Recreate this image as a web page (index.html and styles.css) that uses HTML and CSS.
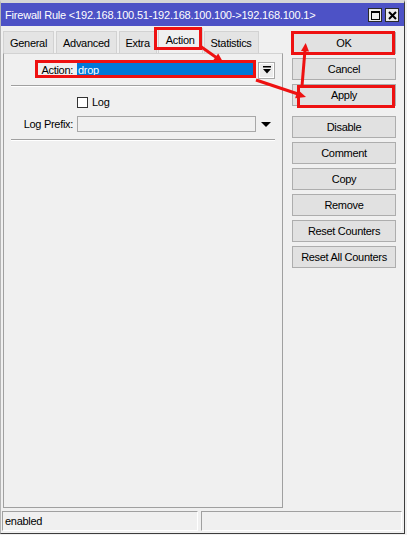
FILE: index.html
```html
<!DOCTYPE html>
<html>
<head>
<meta charset="utf-8">
<link rel="stylesheet" href="styles.css">
</head>
<body>
<div class="window">
  <div class="titlebar">
    <span class="title">Firewall Rule &lt;192.168.100.51-192.168.100.100-&gt;192.168.100.1&gt;</span>
    <div class="tb-btns">
      <span class="tb-btn"><svg width="9" height="9" viewBox="0 0 9 9"><rect x="0.5" y="0.5" width="8" height="8" fill="none" stroke="#000"/><rect x="0" y="0" width="9" height="2" fill="#000"/></svg></span>
      <span class="tb-btn"><svg width="9" height="9" viewBox="0 0 9 9"><path d="M1 1 L8 8 M8 1 L1 8" stroke="#000" stroke-width="2"/></svg></span>
    </div>
  </div>
  <div class="client">
    <div class="main">
      <div class="left">
        <div class="tabs">
          <div class="tab">General</div>
          <div class="tab">Advanced</div>
          <div class="tab">Extra</div>
          <div class="tab active">Action</div>
          <div class="tab">Statistics</div>
        </div>
        <div class="panel">
          <div class="row">
            <span class="label">Action:</span>
            <span class="field selected">drop</span>
            <span class="dd-btn"><svg width="8" height="8" viewBox="0 0 8 8"><rect x="0" y="0" width="8" height="1.5" fill="#000"/><path d="M0 3 H8 L4 7.5 Z" fill="#000"/></svg></span>
          </div>
          <div class="sep"></div>
          <div class="row check-row">
            <span class="label"></span>
            <label class="check"><span class="box"></span>Log</label>
          </div>
          <div class="row">
            <span class="label">Log Prefix:</span>
            <span class="field disabled"></span>
            <span class="dd-tri"><svg width="10" height="5" viewBox="0 0 10 5"><path d="M0 0 H10 L5 5 Z" fill="#000"/></svg></span>
          </div>
          <div class="sep"></div>
        </div>
      </div>
      <div class="right">
        <div class="btn">OK</div>
        <div class="btn">Cancel</div>
        <div class="btn">Apply</div>
        <div class="btn group">Disable</div>
        <div class="btn">Comment</div>
        <div class="btn">Copy</div>
        <div class="btn">Remove</div>
        <div class="btn">Reset Counters</div>
        <div class="btn">Reset All Counters</div>
      </div>
    </div>
    <div class="status">
      <div class="cell first">enabled</div>
      <div class="cell second"></div>
    </div>
  </div>
  <svg class="annot" width="407" height="535" viewBox="0 0 407 535">
    <g fill="none" stroke="#ee1111" stroke-width="3">
      <rect x="155.5" y="28.5" width="45" height="20"/>
      <rect x="36.5" y="61.5" width="218" height="15"/>
      <rect x="292.5" y="32.5" width="101" height="21"/>
      <rect x="298.5" y="86.5" width="95" height="20"/>
      <line x1="200" y1="46" x2="217" y2="58"/>
      <line x1="256" y1="80" x2="298" y2="94"/>
      <line x1="302" y1="86" x2="305" y2="50"/>
    </g>
    <g fill="#ee1111">
      <polygon points="223,62 213.4,59.9 218.2,53.5"/>
      <polygon points="306,97 295.1,98.3 297.9,89.7"/>
      <polygon points="305.7,43 301,51 309,51.4"/>
    </g>
  </svg>
</div>
</body>
</html>
```
FILE: styles.css
```css
* { box-sizing: border-box; }
html, body { margin: 0; padding: 0; }
body {
  background: #f0f0f0;
  font-family: "Liberation Sans", Arial, sans-serif;
  font-size: 11px;
  letter-spacing: -0.3px;
  color: #000;
}
.window {
  position: relative;
  width: 405px;
  height: 534px;
  background: #f0f0f0;
  border-top: 3px solid #d6d6d6;
  border-left: 1px solid #b4b4b4;
  border-right: 1px solid #3c3c3c;
  border-bottom: 1px solid #3c3c3c;
  display: flex;
  flex-direction: column;
}
.titlebar {
  height: 23px;
  background: #4d52c6;
  display: flex;
  align-items: center;
  padding: 1px 5px 0 4px;
}
.title {
  flex: 1;
  color: #fff;
  letter-spacing: -0.2px;
  white-space: nowrap;
}
.tb-btns { display: flex; gap: 3px; }
.tb-btn {
  width: 14px;
  height: 14px;
  background: #ececec;
  border: 1px solid #2a2a2a;
  display: flex;
  align-items: center;
  justify-content: center;
}
.client {
  flex: 1;
  display: flex;
  flex-direction: column;
  padding: 0 2px 2px 1px;
}
.main {
  flex: 1;
  display: flex;
  padding-bottom: 3px;
}
.left {
  width: 280px;
  margin-left: 1px;
  display: flex;
  flex-direction: column;
}
.tabs {
  display: flex;
  align-items: flex-end;
  gap: 2px;
  height: 27px;
}
.tab {
  height: 22px;
  padding: 0 6px;
  background: #e4e4e4;
  border: 1px solid #d2d2d2;
  border-bottom: none;
  display: flex;
  align-items: center;
}
.tab.active {
  height: 25px;
  background: #f0f0f0;
  padding: 0 7px 3px;
  margin: 0 -1px;
}
.panel {
  flex: 1;
  border: 1px solid #a0a0a0;
  border-top-color: #d2d2d2;
  padding: 8px 7px 0 0;
}
.row {
  display: flex;
  align-items: center;
  height: 16px;
}
.label {
  width: 73px;
  text-align: right;
  padding-right: 4px;
  white-space: nowrap;
}
.field {
  width: 179px;
  height: 16px;
  display: flex;
  align-items: center;
  padding-left: 1px;
}
.field.selected { background: #0078d7; color: #fff; }
.field.disabled { border: 1px solid #a8a8a8; background: #f0f0f0; }
.dd-btn {
  width: 17px;
  height: 17px;
  margin-left: 2px;
  background: #ececec;
  border: 1px solid #a8a8a8;
  box-shadow: inset 0 0 0 1px #fff;
  display: flex;
  align-items: center;
  justify-content: center;
}
.dd-tri {
  margin-left: 5px;
  display: flex;
  align-items: center;
}
.sep {
  margin: 6px 0 0 7px;
  height: 2px;
  border-top: 1px solid #a0a0a0;
  border-bottom: 1px solid #fff;
}
.sep + .check-row { margin-top: 9px; }
.check-row { height: 12px; margin-bottom: 8px; }
.row + .sep { margin-top: 7px; }
.check {
  display: flex;
  align-items: center;
  gap: 4px;
}
.box {
  width: 11px;
  height: 11px;
  background: #fff;
  border: 1px solid #333;
}
.right {
  margin-left: 9px;
  padding-top: 6px;
  display: flex;
  flex-direction: column;
  gap: 4px;
}
.btn {
  width: 104px;
  height: 22px;
  background: #e1e1e1;
  border: 1px solid #adadad;
  display: flex;
  align-items: center;
  justify-content: center;
  white-space: nowrap;
}
.btn.group { margin-top: 6px; }
.status {
  height: 20px;
  display: flex;
  gap: 3px;
}
.cell {
  border-top: 1px solid #a0a0a0;
  border-left: 1px solid #a0a0a0;
  border-bottom: 1px solid #fff;
  border-right: 1px solid #fff;
  display: flex;
  align-items: center;
  padding-left: 2px;
}
.cell.first { width: 196px; }
.cell.second { flex: 1; }
.annot {
  position: absolute;
  left: -1px;
  top: -3px;
  pointer-events: none;
}
```
